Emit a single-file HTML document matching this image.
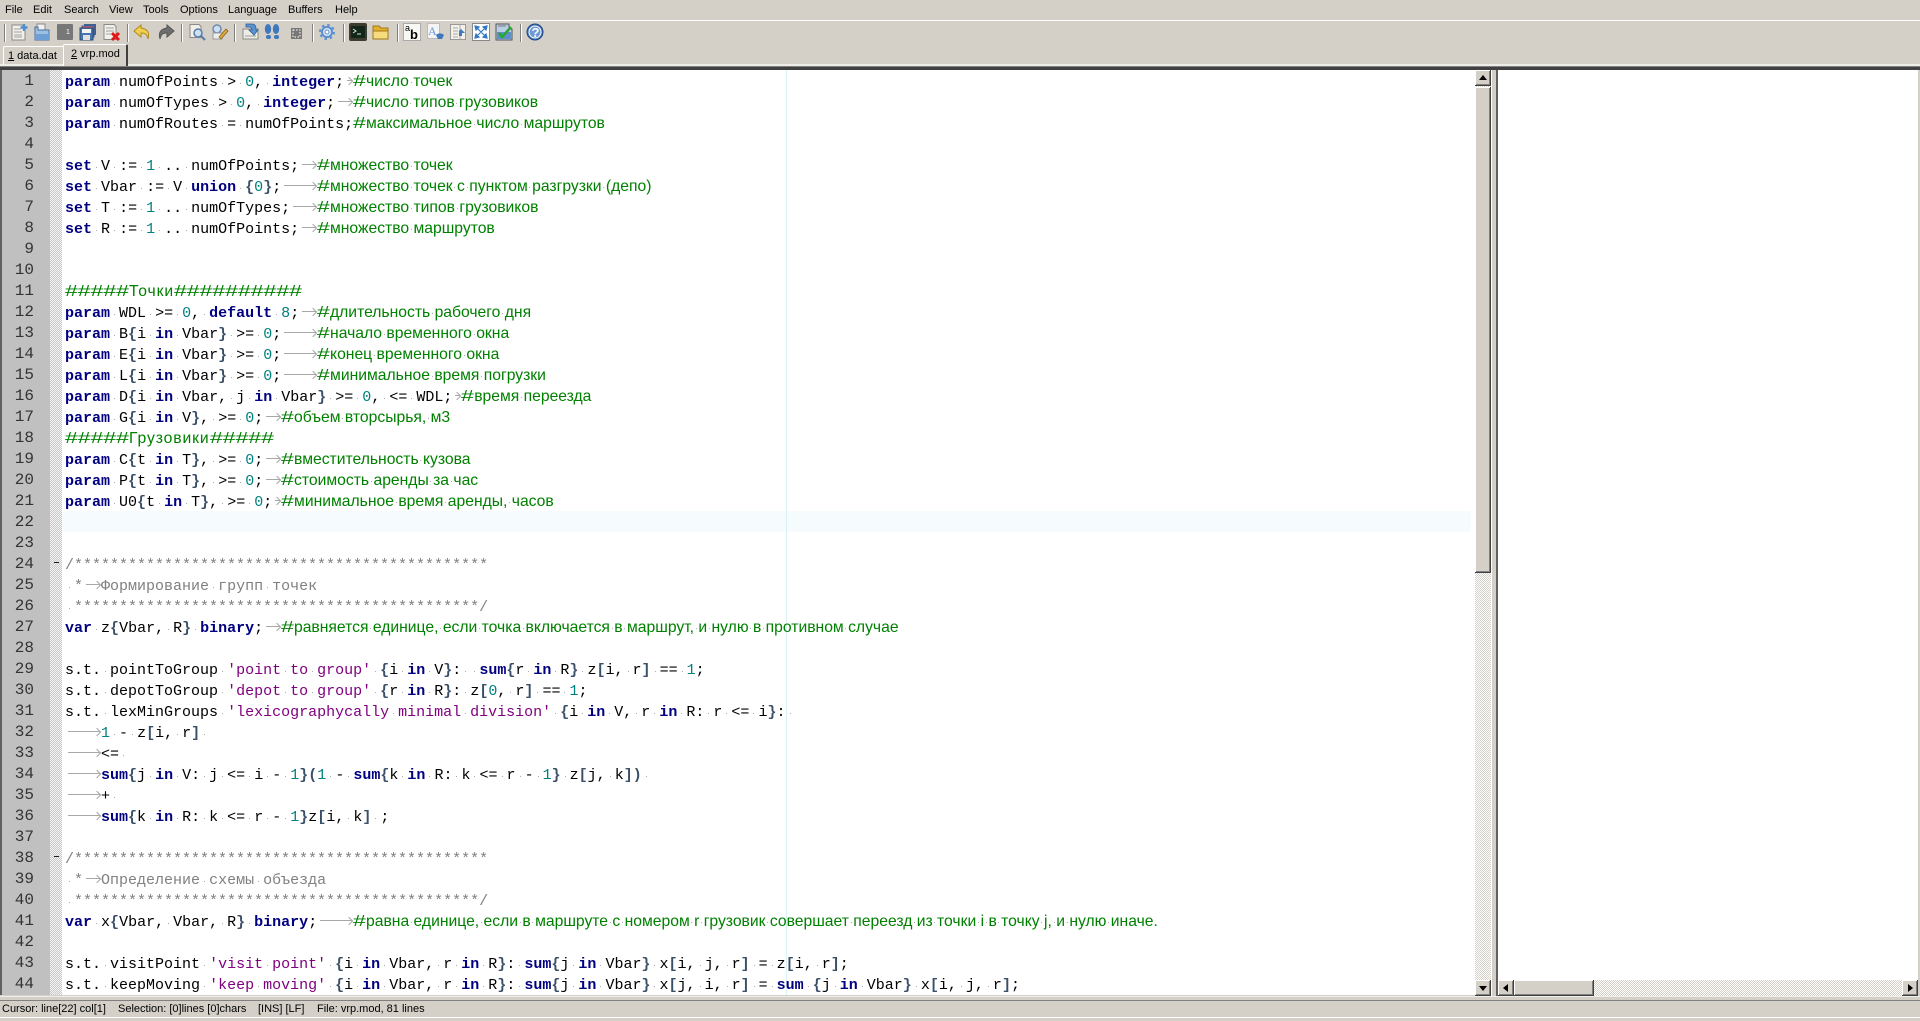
<!DOCTYPE html>
<html><head><meta charset="utf-8"><title>vrp.mod</title>
<style>
html,body{margin:0;padding:0;width:1920px;height:1021px;overflow:hidden;background:#d4d0c8}
body{position:relative;font-family:"Liberation Sans",sans-serif;font-size:11px;color:#000}
.p{position:absolute}
.m{position:absolute;top:3px;line-height:14px}
#code{position:absolute;left:65px;top:72px;width:1407px;height:923px;overflow:hidden;font:15px/21px "Liberation Mono","Noto Sans CJK SC",monospace;color:#000}
.r{height:21px;white-space:pre}
b{color:#000080;font-weight:bold}
em{color:#008080;font-style:normal}
u{color:#800080;text-decoration:none}
tt{font:bold 15px "Liberation Mono",monospace;color:#3a5068}
i{font:15.7px "Liberation Sans","Noto Sans CJK SC",sans-serif;color:#008000}
dfn{display:inline-block;font-style:normal;transform:scaleX(1.466);transform-origin:0 50%;width:12.8px;letter-spacing:0}
cite{font-style:normal;color:#808080}
s{text-decoration:none;background:linear-gradient(#aaa,#aaa) 50% 58%/1px 1px no-repeat}
a{display:inline-block;position:relative;height:21px;vertical-align:top}
a:before{content:"";position:absolute;left:3px;right:1px;top:8px;height:1px;background:#a8a8a8}
a:after{content:"";position:absolute;right:1px;top:5.5px;width:6px;height:6px;box-sizing:border-box;border-top:1px solid #a8a8a8;border-right:1px solid #a8a8a8;transform:rotate(45deg)}
.t1{width:9px}.t2{width:18px}.t3{width:27px}.t4{width:36px}
#nums{position:absolute;left:3px;top:71px;width:31px;height:924px;overflow:hidden;text-align:right;font:16px/21px "Liberation Mono",monospace;color:#333;white-space:pre;margin:0}
.btn{position:absolute;background:#d4d0c8;box-sizing:border-box;box-shadow:inset -1px -1px #404040,inset 1px 1px #fff,inset -2px -2px #808080}
.dith{position:absolute;background:repeating-conic-gradient(#d4d0c8 0 25%,#fff 0 50%) 0 0/2px 2px}
.tri{position:absolute;width:0;height:0}
.sep{position:absolute;top:24px;width:1px;height:18px;background:#808080;box-shadow:1px 0 #fff}
</style></head><body>
<span class="m" style="left:5px">File</span><span class="m" style="left:33px">Edit</span><span class="m" style="left:64px">Search</span><span class="m" style="left:109px">View</span><span class="m" style="left:143px">Tools</span><span class="m" style="left:180px">Options</span><span class="m" style="left:228px">Language</span><span class="m" style="left:288px">Buffers</span><span class="m" style="left:335px">Help</span>
<div class="p" style="left:0;top:20px;width:1920px;height:1px;background:#fff"></div>
<div class="sep" style="left:4px"></div><div class="sep" style="left:127px"></div><div class="sep" style="left:181px"></div><div class="sep" style="left:234px"></div><div class="sep" style="left:312px"></div><div class="sep" style="left:343px"></div><div class="sep" style="left:397px"></div><div class="sep" style="left:520px"></div>
<svg class="p" style="left:0;top:22px" width="560" height="22" viewBox="0 22 560 22">
<g transform="translate(11,24)"><path d="M1 1h10l3 3v12H1z" fill="#f2f0e8" stroke="#8a8a8a"/><path d="M3 5h7M3 8h8M3 11h8M3 13h8" stroke="#a0a0a0"/><path d="M13 0v7M9.500 3.500h7" stroke="#4f8fd0" stroke-width="2.400"/></g>
<g transform="translate(34,24)"><path d="M3 0h8v6H3z" fill="#f0f0f0" stroke="#8a8a8a"/><path d="M1 3h3v3h11v10H1z" fill="#9cc0e4" stroke="#4a6f9c"/><path d="M1 10h14v6H1z" fill="#6d9fd4"/></g>
<g transform="translate(57,24)"><rect x="0" y="0" width="16" height="16" rx="1" fill="#777"/><text x="9" y="10" font-size="7" fill="#fff" font-family="Liberation Sans">1</text></g>
<g transform="translate(80,24)"><rect x="4" y="0" width="12" height="11" fill="#3f5f95"/><rect x="2" y="2" width="12" height="11" fill="#d96060" stroke="#3f5f95"/><rect x="0" y="4" width="13" height="12" fill="#4a74b0" stroke="#2d4a78"/><rect x="2" y="5" width="9" height="4" fill="#f4f4f4"/><rect x="3" y="11" width="7" height="5" fill="#e0e0e0"/></g>
<g transform="translate(103,24)"><path d="M1 0.500h10l2 2v13H1z" fill="#f2f0e8" stroke="#8a8a8a"/><path d="M3 4h8M3 7h8M3 10h5" stroke="#a0a0a0"/><path d="M9 9l7 7M16 9l-7 7" stroke="#e01818" stroke-width="3"/></g>
<g transform="translate(134,24)"><path d="M7 1L0 7l7 6V9c4 0 6 1 7 6 2-7-1-10-7-11z" fill="#f2cf50" stroke="#b08a18"/></g>
<g transform="translate(158,24)"><path d="M9 1l7 6-7 6V9C5 9 3 10 2 15 0 8 3 5 9 4z" fill="#6e6e6e" stroke="#555"/></g>
<g transform="translate(189,24)"><path d="M1 .5h9l2 2v11H1z" fill="#f2f0e8" stroke="#8a8a8a"/><circle cx="9" cy="9" r="4" fill="#cfe0f2" stroke="#5a7ea8" stroke-width="1.500"/><path d="M12 12l4 4" stroke="#5a7ea8" stroke-width="2.200"/></g>
<g transform="translate(211,24)"><circle cx="6" cy="5" r="4" fill="#cfe0f2" stroke="#6f8bad" stroke-width="1.500"/><path d="M2 9h9v6H2z" fill="#eee" stroke="#999"/><path d="M8 13l7-8 2 2-7 8z" fill="#e2a83c" stroke="#7a5a18" stroke-width=".7"/></g>
<g transform="translate(242,24)"><path d="M1 5h15v10H1z" fill="#eeeee6" stroke="#8a8a8a"/><path d="M3 12h11" stroke="#999"/><path d="M4 0h6c3 0 4 2 4 5v1h2l-4 5-5-5h3c0-2-1-3-3-3H4z" fill="#5b93d0" stroke="#2e5f98" stroke-width=".8"/></g>
<g transform="translate(264,24)" fill="#3f78bd"><ellipse cx="4" cy="5" rx="3.200" ry="5"/><rect x="2" y="11" width="5" height="4" rx="2"/><ellipse cx="12" cy="5" rx="3.200" ry="5"/><rect x="10" y="11" width="5" height="4" rx="2"/></g>
<g transform="translate(288,24)"><rect x="3" y="4" width="11" height="11" fill="#777"/><rect x="5" y="6" width="7" height="7" fill="none" stroke="#fff" stroke-dasharray="1.500 1.500"/></g>
<g transform="translate(319,24)"><circle cx="8" cy="8" r="5" fill="#dce8f6" stroke="#5b8fd0" stroke-width="2"/><circle cx="8" cy="8" r="7" fill="none" stroke="#5b8fd0" stroke-width="2" stroke-dasharray="2.500 3"/><circle cx="8" cy="8" r="2" fill="#fff" stroke="#5b8fd0"/></g>
<g transform="translate(349,23)"><rect x="0" y="0" width="18" height="18" rx="2" fill="#3c3c30"/><rect x="2" y="3" width="14" height="12" fill="#13261a"/><path d="M4 6l3 2-3 2M8 11h4" stroke="#d6e6d0" fill="none"/></g>
<g transform="translate(372,24)"><path d="M1 2h6l2 2h7v11H1z" fill="#e2b030" stroke="#a07818"/><path d="M1 7h15v8H1z" fill="#f6dc7c" stroke="#a07818"/></g>
<g transform="translate(403,23)"><rect x=".5" y=".5" width="17" height="17" fill="#f8f8f4" stroke="#aaa"/><text x="2" y="8" font-size="9" font-family="Liberation Sans">a</text><text x="7" y="16" font-size="13" font-weight="bold" font-family="Liberation Sans">b</text></g>
<g transform="translate(427,23)"><rect x=".5" y=".5" width="12" height="15" fill="#f4f4f4" stroke="#bbb"/><text x="1" y="12" font-size="12" fill="#6a9ad8" font-family="Liberation Serif">A</text><path d="M9 12a5 4 0 0 1 8 0l-2 4h-4z" fill="#3f78bd"/></g>
<g transform="translate(450,24)"><rect x=".5" y=".5" width="15" height="15" fill="#f2f0e8" stroke="#999"/><path d="M3 4h5M3 7h5M3 10h5M3 13h5M10 1v14" stroke="#aaa"/><path d="M11 5l4 4h-3v3h-3V7z" fill="#3f78bd"/></g>
<g transform="translate(472,23)"><rect x=".5" y=".5" width="17" height="17" fill="#fff" stroke="#888"/><path d="M3 3l4 1-3 3zM15 3l-1 4-3-3zM3 15l1-4 3 3zM15 15l-4-1 3-3zM4 4l10 10M14 4L4 14" fill="#2f78c8" stroke="#2f78c8" stroke-width="1.200"/></g>
<g transform="translate(495,23)"><path d="M1 1h13v5l3 0v11H1z" fill="#b8cfe6" stroke="#555"/><rect x="2" y="9" width="14" height="7" fill="#5d8fc8"/><path d="M3 3h8" stroke="#777"/><path d="M4 10l3 4 9-10" fill="none" stroke="#28a830" stroke-width="2.500"/></g>
<g transform="translate(526,23)"><circle cx="9" cy="9" r="8" fill="#3f6fb0" stroke="#1f4a88"/><circle cx="9" cy="9" r="6" fill="#6d9ad4" stroke="#fff"/><text x="5.500" y="14" font-size="13" font-weight="bold" fill="#fff" font-family="Liberation Sans">?</text></g>
</svg>
<!-- tabs -->
<div class="p" style="left:3px;top:46px;width:60px;height:18px;box-sizing:border-box;border-top:1px solid #fff;border-left:1px solid #fff;border-radius:2px 0 0 0;line-height:19px;font-size:11px;padding-left:4px;white-space:nowrap"><span style="text-decoration:underline">1</span> data.dat</div>
<div class="p" style="left:63px;top:44px;width:65px;height:22px;box-sizing:border-box;border-top:1px solid #fff;border-left:1px solid #fff;border-right:2px solid #404040;border-radius:2px 2px 0 0;line-height:18px;font-size:11px;padding-left:7px;white-space:nowrap;background:#d4d0c8;z-index:2"><span style="text-decoration:underline">2</span> vrp.mod</div>
<div class="p" style="left:0;top:64px;width:1920px;height:2px;background:#efede8"></div>
<div class="p" style="left:0;top:66px;width:1920px;height:1px;background:#808080"></div>
<div class="p" style="left:0;top:67px;width:1920px;height:3px;background:#404040"></div>
<!-- left editor -->
<div class="p" style="left:0;top:70px;width:1475px;height:925px;background:#fff"></div>
<div class="p" style="left:0;top:70px;width:2px;height:925px;background:#606060"></div>
<div class="p" style="left:2px;top:70px;width:48px;height:925px;background:#c0c0c0"></div>
<div class="p" style="left:50px;top:70px;width:12px;height:925px;background:repeating-conic-gradient(#c8c8c8 0 25%,#f4f4f4 0 50%) 0 0/2px 2px"></div>
<div class="p" style="left:62px;top:511px;width:1409px;height:21px;background:#f6fcfd"></div>
<div class="p" style="left:786px;top:70px;width:1px;height:925px;background:#d9f0f5"></div>
<div class="p" style="left:54px;top:562px;width:5px;height:1px;background:#222"></div>
<div class="p" style="left:54px;top:856px;width:5px;height:1px;background:#222"></div>
<pre id="nums">1
2
3
4
5
6
7
8
9
10
11
12
13
14
15
16
17
18
19
20
21
22
23
24
25
26
27
28
29
30
31
32
33
34
35
36
37
38
39
40
41
42
43
44</pre>
<div id="code">
<div class="r"><b>param</b><s> </s>numOfPoints<s> </s>&gt;<s> </s><em>0</em>,<s> </s><b>integer</b>;<a class="t1"></a><i><dfn>#</dfn>число<s> </s>точек</i></div>
<div class="r"><b>param</b><s> </s>numOfTypes<s> </s>&gt;<s> </s><em>0</em>,<s> </s><b>integer</b>;<a class="t2"></a><i><dfn>#</dfn>число<s> </s>типов<s> </s>грузовиков</i></div>
<div class="r"><b>param</b><s> </s>numOfRoutes<s> </s>=<s> </s>numOfPoints;<i><dfn>#</dfn>максимальное<s> </s>число<s> </s>маршрутов</i></div>
<div class="r"></div>
<div class="r"><b>set</b><s> </s>V<s> </s>:=<s> </s><em>1</em><s> </s>..<s> </s>numOfPoints;<a class="t2"></a><i><dfn>#</dfn>множество<s> </s>точек</i></div>
<div class="r"><b>set</b><s> </s>Vbar<s> </s>:=<s> </s>V<s> </s><b>union</b><s> </s><tt>{</tt><em>0</em><tt>}</tt>;<a class="t4"></a><i><dfn>#</dfn>множество<s> </s>точек<s> </s>с<s> </s>пунктом<s> </s>разгрузки<s> </s>(депо)</i></div>
<div class="r"><b>set</b><s> </s>T<s> </s>:=<s> </s><em>1</em><s> </s>..<s> </s>numOfTypes;<a class="t3"></a><i><dfn>#</dfn>множество<s> </s>типов<s> </s>грузовиков</i></div>
<div class="r"><b>set</b><s> </s>R<s> </s>:=<s> </s><em>1</em><s> </s>..<s> </s>numOfPoints;<a class="t2"></a><i><dfn>#</dfn>множество<s> </s>маршрутов</i></div>
<div class="r"></div>
<div class="r"></div>
<div class="r"><i style="letter-spacing:.9px"><dfn style="width:64px">#####</dfn>Точки<dfn style="width:128px">##########</dfn></i></div>
<div class="r"><b>param</b><s> </s>WDL<s> </s>&gt;=<s> </s><em>0</em>,<s> </s><b>default</b><s> </s><em>8</em>;<a class="t2"></a><i><dfn>#</dfn>длительность<s> </s>рабочего<s> </s>дня</i></div>
<div class="r"><b>param</b><s> </s>B<tt>{</tt>i<s> </s><b>in</b><s> </s>Vbar<tt>}</tt><s> </s>&gt;=<s> </s><em>0</em>;<a class="t4"></a><i><dfn>#</dfn>начало<s> </s>временного<s> </s>окна</i></div>
<div class="r"><b>param</b><s> </s>E<tt>{</tt>i<s> </s><b>in</b><s> </s>Vbar<tt>}</tt><s> </s>&gt;=<s> </s><em>0</em>;<a class="t4"></a><i><dfn>#</dfn>конец<s> </s>временного<s> </s>окна</i></div>
<div class="r"><b>param</b><s> </s>L<tt>{</tt>i<s> </s><b>in</b><s> </s>Vbar<tt>}</tt><s> </s>&gt;=<s> </s><em>0</em>;<a class="t4"></a><i><dfn>#</dfn>минимальное<s> </s>время<s> </s>погрузки</i></div>
<div class="r"><b>param</b><s> </s>D<tt>{</tt>i<s> </s><b>in</b><s> </s>Vbar,<s> </s>j<s> </s><b>in</b><s> </s>Vbar<tt>}</tt><s> </s>&gt;=<s> </s><em>0</em>,<s> </s>&lt;=<s> </s>WDL;<a class="t1"></a><i><dfn>#</dfn>время<s> </s>переезда</i></div>
<div class="r"><b>param</b><s> </s>G<tt>{</tt>i<s> </s><b>in</b><s> </s>V<tt>}</tt>,<s> </s>&gt;=<s> </s><em>0</em>;<a class="t2"></a><i><dfn>#</dfn>объем<s> </s>вторсырья,<s> </s>м3</i></div>
<div class="r"><i style="letter-spacing:.9px"><dfn style="width:64px">#####</dfn>Грузовики<dfn style="width:64px">#####</dfn></i></div>
<div class="r"><b>param</b><s> </s>C<tt>{</tt>t<s> </s><b>in</b><s> </s>T<tt>}</tt>,<s> </s>&gt;=<s> </s><em>0</em>;<a class="t2"></a><i><dfn>#</dfn>вместительность<s> </s>кузова</i></div>
<div class="r"><b>param</b><s> </s>P<tt>{</tt>t<s> </s><b>in</b><s> </s>T<tt>}</tt>,<s> </s>&gt;=<s> </s><em>0</em>;<a class="t2"></a><i><dfn>#</dfn>стоимость<s> </s>аренды<s> </s>за<s> </s>час</i></div>
<div class="r"><b>param</b><s> </s>U0<tt>{</tt>t<s> </s><b>in</b><s> </s>T<tt>}</tt>,<s> </s>&gt;=<s> </s><em>0</em>;<a class="t1"></a><i><dfn>#</dfn>минимальное<s> </s>время<s> </s>аренды,<s> </s>часов</i></div>
<div class="r"></div>
<div class="r"></div>
<div class="r"><cite>/**********************************************</cite></div>
<div class="r"><cite><s> </s>*<a class="t2"></a>Формирование<s> </s>групп<s> </s>точек</cite></div>
<div class="r"><cite><s> </s>*********************************************/</cite></div>
<div class="r"><b>var</b><s> </s>z<tt>{</tt>Vbar,<s> </s>R<tt>}</tt><s> </s><b>binary</b>;<a class="t2"></a><i><dfn>#</dfn>равняется<s> </s>единице,<s> </s>если<s> </s>точка<s> </s>включается<s> </s>в<s> </s>маршрут,<s> </s>и<s> </s>нулю<s> </s>в<s> </s>противном<s> </s>случае</i></div>
<div class="r"></div>
<div class="r">s.t.<s> </s>pointToGroup<s> </s><u>'point<s> </s>to<s> </s>group'</u><s> </s><tt>{</tt>i<s> </s><b>in</b><s> </s>V<tt>}</tt>:<s> </s><s> </s><b>sum</b><tt>{</tt>r<s> </s><b>in</b><s> </s>R<tt>}</tt><s> </s>z<tt>[</tt>i,<s> </s>r<tt>]</tt><s> </s>==<s> </s><em>1</em>;</div>
<div class="r">s.t.<s> </s>depotToGroup<s> </s><u>'depot<s> </s>to<s> </s>group'</u><s> </s><tt>{</tt>r<s> </s><b>in</b><s> </s>R<tt>}</tt>:<s> </s>z<tt>[</tt><em>0</em>,<s> </s>r<tt>]</tt><s> </s>==<s> </s><em>1</em>;</div>
<div class="r">s.t.<s> </s>lexMinGroups<s> </s><u>'lexicographycally<s> </s>minimal<s> </s>division'</u><s> </s><tt>{</tt>i<s> </s><b>in</b><s> </s>V,<s> </s>r<s> </s><b>in</b><s> </s>R:<s> </s>r<s> </s>&lt;=<s> </s>i<tt>}</tt>:<s> </s></div>
<div class="r"><a class="t4"></a><em>1</em><s> </s>-<s> </s>z<tt>[</tt>i,<s> </s>r<tt>]</tt><s> </s></div>
<div class="r"><a class="t4"></a>&lt;=<s> </s></div>
<div class="r"><a class="t4"></a><b>sum</b><tt>{</tt>j<s> </s><b>in</b><s> </s>V:<s> </s>j<s> </s>&lt;=<s> </s>i<s> </s>-<s> </s><em>1</em><tt>}(</tt><em>1</em><s> </s>-<s> </s><b>sum</b><tt>{</tt>k<s> </s><b>in</b><s> </s>R:<s> </s>k<s> </s>&lt;=<s> </s>r<s> </s>-<s> </s><em>1</em><tt>}</tt><s> </s>z<tt>[</tt>j,<s> </s>k<tt>])</tt><s> </s></div>
<div class="r"><a class="t4"></a>+<s> </s></div>
<div class="r"><a class="t4"></a><b>sum</b><tt>{</tt>k<s> </s><b>in</b><s> </s>R:<s> </s>k<s> </s>&lt;=<s> </s>r<s> </s>-<s> </s><em>1</em><tt>}</tt>z<tt>[</tt>i,<s> </s>k<tt>]</tt><s> </s>;</div>
<div class="r"></div>
<div class="r"><cite>/**********************************************</cite></div>
<div class="r"><cite><s> </s>*<a class="t2"></a>Определение<s> </s>схемы<s> </s>объезда</cite></div>
<div class="r"><cite><s> </s>*********************************************/</cite></div>
<div class="r"><b>var</b><s> </s>x<tt>{</tt>Vbar,<s> </s>Vbar,<s> </s>R<tt>}</tt><s> </s><b>binary</b>;<a class="t4"></a><i><dfn>#</dfn>равна<s> </s>единице,<s> </s>если<s> </s>в<s> </s>маршруте<s> </s>с<s> </s>номером<s> </s>r<s> </s>грузовик<s> </s>совершает<s> </s>переезд<s> </s>из<s> </s>точки<s> </s>i<s> </s>в<s> </s>точку<s> </s>j,<s> </s>и<s> </s>нулю<s> </s>иначе.</i></div>
<div class="r"></div>
<div class="r">s.t.<s> </s>visitPoint<s> </s><u>'visit<s> </s>point'</u><s> </s><tt>{</tt>i<s> </s><b>in</b><s> </s>Vbar,<s> </s>r<s> </s><b>in</b><s> </s>R<tt>}</tt>:<s> </s><b>sum</b><tt>{</tt>j<s> </s><b>in</b><s> </s>Vbar<tt>}</tt><s> </s>x<tt>[</tt>i,<s> </s>j,<s> </s>r<tt>]</tt><s> </s>=<s> </s>z<tt>[</tt>i,<s> </s>r<tt>]</tt>;</div>
<div class="r">s.t.<s> </s>keepMoving<s> </s><u>'keep<s> </s>moving'</u><s> </s><tt>{</tt>i<s> </s><b>in</b><s> </s>Vbar,<s> </s>r<s> </s><b>in</b><s> </s>R<tt>}</tt>:<s> </s><b>sum</b><tt>{</tt>j<s> </s><b>in</b><s> </s>Vbar<tt>}</tt><s> </s>x<tt>[</tt>j,<s> </s>i,<s> </s>r<tt>]</tt><s> </s>=<s> </s><b>sum</b><s> </s><tt>{</tt>j<s> </s><b>in</b><s> </s>Vbar<tt>}</tt><s> </s>x<tt>[</tt>i,<s> </s>j,<s> </s>r<tt>]</tt>;</div>
</div>
<!-- left scrollbar -->
<div class="dith" style="left:1475px;top:70px;width:16px;height:925px"></div>
<div class="btn" style="left:1475px;top:70px;width:16px;height:16px"></div>
<div class="tri" style="left:1479px;top:75px;border-left:4px solid transparent;border-right:4px solid transparent;border-bottom:5px solid #000"></div>
<div class="btn" style="left:1475px;top:87px;width:16px;height:486px"></div>
<div class="btn" style="left:1475px;top:980px;width:16px;height:16px"></div>
<div class="tri" style="left:1479px;top:986px;border-left:4px solid transparent;border-right:4px solid transparent;border-top:5px solid #000"></div>
<!-- splitter -->
<div class="p" style="left:1491px;top:70px;width:5px;height:926px;background:#d4d0c8;box-shadow:inset 1px 0 #fff"></div>
<div class="p" style="left:1496px;top:70px;width:2px;height:926px;background:#606060"></div>
<!-- right pane -->
<div class="p" style="left:1498px;top:70px;width:420px;height:926px;background:#fff"></div>
<div class="dith" style="left:1498px;top:980px;width:420px;height:16px"></div>
<div class="btn" style="left:1498px;top:980px;width:16px;height:16px"></div>
<div class="tri" style="left:1503px;top:984px;border-top:4px solid transparent;border-bottom:4px solid transparent;border-right:5px solid #000"></div>
<div class="btn" style="left:1514px;top:980px;width:80px;height:16px"></div>
<div class="btn" style="left:1902px;top:980px;width:16px;height:16px"></div>
<div class="tri" style="left:1908px;top:984px;border-top:4px solid transparent;border-bottom:4px solid transparent;border-left:5px solid #000"></div>
<!-- status -->
<div class="p" style="left:0;top:996px;width:1920px;height:1px;background:#f0eee9"></div>
<div class="p" style="left:0;top:1000px;width:1920px;height:1px;background:#808080"></div>
<div class="p" style="left:0;top:1017px;width:1920px;height:1px;background:#fff"></div>
<span class="m" style="left:2px;top:1002px">Cursor: line[22] col[1]</span>
<span class="m" style="left:118px;top:1002px">Selection: [0]lines [0]chars</span>
<span class="m" style="left:258px;top:1002px">[INS] [LF]</span>
<span class="m" style="left:317px;top:1002px">File: vrp.mod, 81 lines</span>
</body></html>
